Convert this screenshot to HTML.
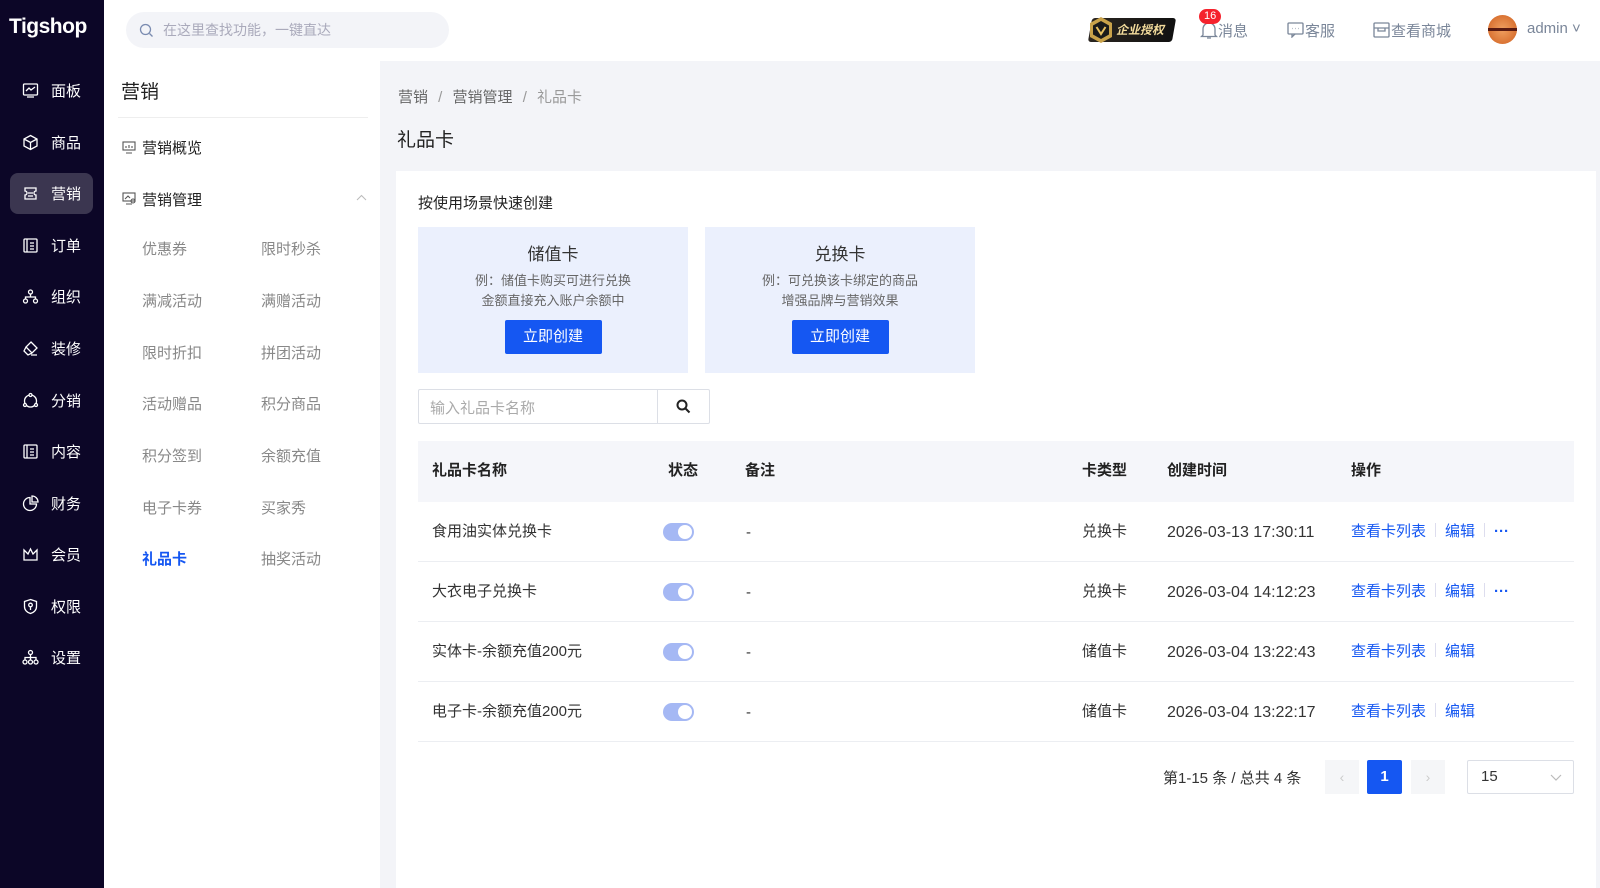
<!DOCTYPE html>
<html><head><meta charset="utf-8">
<style>
*{margin:0;padding:0;box-sizing:border-box}
body{width:1600px;height:888px;overflow:hidden;font-family:"Liberation Sans","Noto Sans CJK SC",sans-serif;background:#f3f4f8;color:#333;position:relative;font-size:14px}
.abs{position:absolute}
.side{left:0;top:0;width:104px;height:888px;background:#0c0627}
.logo{left:9px;top:15px;color:#fff;font-weight:bold;font-size:21px;letter-spacing:-0.5px}
.nav{left:10px;width:83px;height:41px;border-radius:8px;color:#fff;font-size:15px}
.nav svg{position:absolute;left:12px;top:12px}
.nav span{position:absolute;left:41px;top:10px}
.nav.act{background:#3b3650}
.top{left:104px;top:0;width:1496px;height:61px;background:#fff}
.srch{left:126px;top:12px;width:323px;height:36px;border-radius:18px;background:#f3f4f8;color:#aab;font-size:14px}
.sub{left:104px;top:61px;width:276px;height:827px;background:#fff}
.gray{color:#888;font-size:15px}
.card{left:396px;top:171px;width:1200px;height:717px;background:#fff}
.sc{background:#ebf0fd;width:270px;height:146px;text-align:center}
.btn{background:#1557f2;color:#fff;border-radius:2px;width:97px;height:34px;line-height:34px;font-size:15px;margin:0 auto}
.th{left:418px;top:441px;width:1156px;height:61px;background:#f5f6fa}
.row{left:418px;width:1156px;height:60px;border-bottom:1px solid #eceef2}
.t{position:absolute;top:20px;font-size:15px;line-height:20px;height:20px;color:#333}
.tg{position:absolute;left:245px;top:21px;width:31px;height:18px;border-radius:9px;background:#a5b8f4}
.tg:after{content:"";position:absolute;right:2px;top:2px;width:14px;height:14px;border-radius:7px;background:#fff}
.lk{color:#1557f2}
.sep{display:inline-block;width:1px;height:14px;background:#dde;margin:0 9px;vertical-align:-1px}
</style></head><body>
<div class="abs side"></div>
<div class="abs logo">Tigshop</div>
<div class="abs nav" style="top:70px"><svg width="17" height="17" viewBox="0 0 17 17" fill="none" stroke="#fff" stroke-width="1.3"><rect x="1.5" y="2" width="14" height="11" rx="1"/><path d="M4 9l3-3 2 2 4-3M5 15h7"/></svg><span>面板</span></div>
<div class="abs nav" style="top:122px"><svg width="17" height="17" viewBox="0 0 17 17" fill="none" stroke="#fff" stroke-width="1.3"><path d="M8.5 1.5l6.5 3.5v7l-6.5 3.5-6.5-3.5v-7zM2 5l6.5 3.5L15 5M8.5 8.5v7"/></svg><span>商品</span></div>
<div class="abs nav act" style="top:173px"><svg width="17" height="17" viewBox="0 0 17 17" fill="none" stroke="#fff" stroke-width="1.3"><path d="M3 3h11v3a2 2 0 000 4v4H3v-4a2 2 0 000-4zM6 8h5M6 11h5"/></svg><span>营销</span></div>
<div class="abs nav" style="top:225px"><svg width="17" height="17" viewBox="0 0 17 17" fill="none" stroke="#fff" stroke-width="1.3"><rect x="2" y="2" width="13" height="13" rx="1"/><path d="M5 2v13M8 6h4M8 9h4M8 12h4"/></svg><span>订单</span></div>
<div class="abs nav" style="top:276px"><svg width="17" height="17" viewBox="0 0 17 17" fill="none" stroke="#fff" stroke-width="1.3"><circle cx="8.5" cy="4" r="2"/><circle cx="3.5" cy="13" r="2"/><circle cx="13.5" cy="13" r="2"/><path d="M8.5 6v3M3.5 11V9h10v2"/></svg><span>组织</span></div>
<div class="abs nav" style="top:328px"><svg width="17" height="17" viewBox="0 0 17 17" fill="none" stroke="#fff" stroke-width="1.3"><path d="M9 2l6 6-5 5-6-6zM4 7l-2 4 4 4 4-2M9 15h6"/></svg><span>装修</span></div>
<div class="abs nav" style="top:380px"><svg width="17" height="17" viewBox="0 0 17 17" fill="none" stroke="#fff" stroke-width="1.3"><circle cx="8.5" cy="9" r="6"/><circle cx="8.5" cy="3" r="1.5" fill="#0c0627"/><circle cx="3" cy="13" r="1.5" fill="#0c0627"/><circle cx="14" cy="13" r="1.5" fill="#0c0627"/></svg><span>分销</span></div>
<div class="abs nav" style="top:431px"><svg width="17" height="17" viewBox="0 0 17 17" fill="none" stroke="#fff" stroke-width="1.3"><rect x="2" y="2" width="13" height="13" rx="1"/><path d="M5 2v13M8 6h4M8 9h4M8 12h4"/></svg><span>内容</span></div>
<div class="abs nav" style="top:483px"><svg width="17" height="17" viewBox="0 0 17 17" fill="none" stroke="#fff" stroke-width="1.3"><path d="M8 2.5a6.5 6.5 0 106.5 6.5H8z"/><path d="M10 1v6h6a6 6 0 00-6-6z"/></svg><span>财务</span></div>
<div class="abs nav" style="top:534px"><svg width="17" height="17" viewBox="0 0 17 17" fill="none" stroke="#fff" stroke-width="1.3"><path d="M2 4l4 4 2.5-5 2.5 5 4-4v10H2z"/></svg><span>会员</span></div>
<div class="abs nav" style="top:586px"><svg width="17" height="17" viewBox="0 0 17 17" fill="none" stroke="#fff" stroke-width="1.3"><path d="M8.5 1.5l6 2v5c0 4-3 6-6 7-3-1-6-3-6-7v-5z"/><circle cx="8.5" cy="7" r="1.8"/><path d="M8.5 9v3"/></svg><span>权限</span></div>
<div class="abs nav" style="top:637px"><svg width="17" height="17" viewBox="0 0 17 17" fill="none" stroke="#fff" stroke-width="1.3"><circle cx="8.5" cy="3.5" r="2"/><circle cx="3" cy="13" r="2"/><circle cx="8.5" cy="13" r="2"/><circle cx="14" cy="13" r="2"/><path d="M8.5 5.5V11M3 11V8.5h11V11"/></svg><span>设置</span></div>

<div class="abs top"></div>
<div class="abs srch"><svg class="abs" style="left:13px;top:11px" width="15" height="15" viewBox="0 0 15 15" fill="none" stroke="#7a8bb0" stroke-width="1.3"><circle cx="6.5" cy="6.5" r="5"/><path d="M10.5 10.5l3 3"/></svg><span class="abs" style="left:37px;top:8px">在这里查找功能，一键直达</span></div>
<div class="abs" style="left:1090px;top:18px;width:84px;height:24px;background:linear-gradient(90deg,#2a2520,#111);border-radius:3px;transform:skewX(-10deg)"></div>
<svg class="abs" style="left:1088px;top:16px" width="26" height="28" viewBox="0 0 26 28"><path d="M13 1l11 6v14l-11 6-11-6V7z" fill="#c9a24a"/><path d="M13 5l8 4.5v9L13 23l-8-4.5v-9z" fill="#1a1a1a"/><path d="M8.5 11l4.5 7 4.5-7" stroke="#e8c060" stroke-width="2" fill="none"/></svg>
<div class="abs" style="left:1116px;top:21px;color:#f3dc9c;font-size:12px;font-weight:bold;font-style:italic">企业授权</div>
<svg class="abs" style="left:1200px;top:21px" width="18" height="19" viewBox="0 0 18 19" fill="none" stroke="#7a8699" stroke-width="1.3"><path d="M3 14V8a6 6 0 0112 0v6l1.5 1.5h-15zM7 17h4"/></svg>
<div class="abs" style="left:1199px;top:9px;background:#f5222d;color:#fff;font-size:11px;border-radius:8px;padding:0 5px;line-height:15px">16</div>
<div class="abs" style="left:1218px;top:20px;color:#7a8699;font-size:15px">消息</div>
<svg class="abs" style="left:1287px;top:22px" width="17" height="16" viewBox="0 0 17 16" fill="none" stroke="#7a8699" stroke-width="1.3"><rect x="1" y="1" width="15" height="11" rx="1"/><path d="M5 12v3l3-3M5 6.5h.5M8.3 6.5h.5M11.5 6.5h.5"/></svg>
<div class="abs" style="left:1305px;top:20px;color:#7a8699;font-size:15px">客服</div>
<svg class="abs" style="left:1373px;top:22px" width="17" height="16" viewBox="0 0 17 16" fill="none" stroke="#7a8699" stroke-width="1.3"><rect x="1" y="1" width="15" height="14" rx="1"/><path d="M1 6h15M5 6v3h7V6"/></svg>
<div class="abs" style="left:1391px;top:20px;color:#7a8699;font-size:15px">查看商城</div>
<div class="abs" style="left:1488px;top:15px;width:29px;height:29px;border-radius:50%;background:radial-gradient(circle,#f0a060,#d06020)"></div>
<div class="abs" style="left:1488px;top:28px;width:29px;height:3px;background:#5a1a10"></div>
<div class="abs" style="left:1527px;top:20px;color:#7a8699;font-size:15px">admin ˅</div>

<div class="abs sub"></div>
<div class="abs" style="left:121px;top:77px;font-size:19px;color:#222">营销</div>
<div class="abs" style="left:118px;top:117px;width:250px;height:1px;background:#eee"></div>
<svg class="abs" style="left:122px;top:141px" width="14" height="13" viewBox="0 0 14 13" fill="none" stroke="#555" stroke-width="1.1"><rect x="1" y="1" width="12" height="8"/><path d="M4 12h6M4 7V5M7 7V4M10 7V5"/></svg>
<div class="abs" style="left:142px;top:137px;font-size:15px;color:#222">营销概览</div>
<svg class="abs" style="left:122px;top:192px" width="14" height="13" viewBox="0 0 14 13" fill="none" stroke="#555" stroke-width="1.1"><rect x="1" y="1" width="12" height="8"/><path d="M3 7l3-3 2 2M4 12h6"/><circle cx="11" cy="9" r="2"/></svg>
<div class="abs" style="left:142px;top:189px;font-size:15px;color:#222">营销管理</div>
<svg class="abs" style="left:356px;top:194px" width="11" height="7" viewBox="0 0 11 7" fill="none" stroke="#bbb" stroke-width="1"><path d="M1 6l4.5-4.5L10 6"/></svg>
<div class="abs gray" style="left:142px;top:238px">优惠券</div><div class="abs gray" style="left:261px;top:238px">限时秒杀</div>
<div class="abs gray" style="left:142px;top:290px">满减活动</div><div class="abs gray" style="left:261px;top:290px">满赠活动</div>
<div class="abs gray" style="left:142px;top:342px">限时折扣</div><div class="abs gray" style="left:261px;top:342px">拼团活动</div>
<div class="abs gray" style="left:142px;top:393px">活动赠品</div><div class="abs gray" style="left:261px;top:393px">积分商品</div>
<div class="abs gray" style="left:142px;top:445px">积分签到</div><div class="abs gray" style="left:261px;top:445px">余额充值</div>
<div class="abs gray" style="left:142px;top:497px">电子卡券</div><div class="abs gray" style="left:261px;top:497px">买家秀</div>
<div class="abs" style="left:142px;top:548px;font-size:15px;color:#1557f2;font-weight:bold">礼品卡</div><div class="abs gray" style="left:261px;top:548px">抽奖活动</div>

<div class="abs" style="left:398px;top:86px;font-size:15px;color:#666">营销 <span style="margin:0 6px;color:#999">/</span> 营销管理 <span style="margin:0 6px;color:#999">/</span> <span style="color:#999">礼品卡</span></div>
<div class="abs" style="left:397px;top:125px;font-size:19px;color:#222">礼品卡</div>
<div class="abs card"></div>
<div class="abs" style="left:418px;top:192px;font-size:15px;color:#222">按使用场景快速创建</div>
<div class="abs sc" style="left:418px;top:227px"><div style="font-size:17px;color:#333;margin-top:13px">储值卡</div><div style="font-size:13px;color:#666;line-height:20px;margin-top:6px">例：储值卡购买可进行兑换<br>金额直接充入账户余额中</div><div class="btn" style="margin-top:9px">立即创建</div></div>
<div class="abs sc" style="left:705px;top:227px"><div style="font-size:17px;color:#333;margin-top:13px">兑换卡</div><div style="font-size:13px;color:#666;line-height:20px;margin-top:6px">例：可兑换该卡绑定的商品<br>增强品牌与营销效果</div><div class="btn" style="margin-top:9px">立即创建</div></div>
<div class="abs" style="left:418px;top:389px;width:292px;height:35px;border:1px solid #dcdfe6;border-radius:2px"><span class="abs" style="left:11px;top:7px;color:#aaa;font-size:15px">输入礼品卡名称</span><div class="abs" style="left:238px;top:0;width:1px;height:33px;background:#dcdfe6"></div><svg class="abs" style="left:257px;top:9px" width="15" height="15" viewBox="0 0 15 15" fill="none" stroke="#222" stroke-width="2"><circle cx="6" cy="6" r="4.5"/><path d="M9.5 9.5l4 4"/></svg></div>

<div class="abs th"><span class="t" style="left:14px;font-weight:bold;color:#222">礼品卡名称</span><span class="t" style="left:250px;font-weight:bold;color:#222">状态</span><span class="t" style="left:327px;font-weight:bold;color:#222">备注</span><span class="t" style="left:664px;font-weight:bold;color:#222">卡类型</span><span class="t" style="left:749px;font-weight:bold;color:#222">创建时间</span><span class="t" style="left:933px;font-weight:bold;color:#222">操作</span></div>
<div class="abs row" style="top:502px"><span class="t" style="left:14px">食用油实体兑换卡</span><div class="tg"></div><span class="t" style="left:328px;top:21px">-</span><span class="t" style="left:664px">兑换卡</span><span class="t" style="left:749px;top:21px;font-size:16px">2026-03-13 17:30:11</span><span class="t lk" style="left:933px">查看卡列表<span class="sep"></span>编辑<span class="sep"></span><b>···</b></span></div>
<div class="abs row" style="top:562px"><span class="t" style="left:14px">大衣电子兑换卡</span><div class="tg"></div><span class="t" style="left:328px;top:21px">-</span><span class="t" style="left:664px">兑换卡</span><span class="t" style="left:749px;top:21px;font-size:16px">2026-03-04 14:12:23</span><span class="t lk" style="left:933px">查看卡列表<span class="sep"></span>编辑<span class="sep"></span><b>···</b></span></div>
<div class="abs row" style="top:622px"><span class="t" style="left:14px">实体卡-余额充值200元</span><div class="tg"></div><span class="t" style="left:328px;top:21px">-</span><span class="t" style="left:664px">储值卡</span><span class="t" style="left:749px;top:21px;font-size:16px">2026-03-04 13:22:43</span><span class="t lk" style="left:933px">查看卡列表<span class="sep"></span>编辑</span></div>
<div class="abs row" style="top:682px"><span class="t" style="left:14px">电子卡-余额充值200元</span><div class="tg"></div><span class="t" style="left:328px;top:21px">-</span><span class="t" style="left:664px">储值卡</span><span class="t" style="left:749px;top:21px;font-size:16px">2026-03-04 13:22:17</span><span class="t lk" style="left:933px">查看卡列表<span class="sep"></span>编辑</span></div>

<div class="abs" style="left:1163px;top:767px;font-size:15px;color:#333">第1-15 条 / 总共 4 条</div>
<div class="abs" style="left:1325px;top:760px;width:34px;height:34px;background:#f5f6f8;color:#ccc;text-align:center;line-height:34px">‹</div>
<div class="abs" style="left:1367px;top:760px;width:35px;height:34px;background:#1557f2;color:#fff;text-align:center;line-height:34px;font-weight:bold;border-radius:2px;font-size:15px">1</div>
<div class="abs" style="left:1411px;top:760px;width:34px;height:34px;background:#f5f6f8;color:#ccc;text-align:center;line-height:34px">›</div>
<div class="abs" style="left:1467px;top:760px;width:107px;height:34px;border:1px solid #dcdfe6;border-radius:2px"><span class="abs" style="left:13px;top:7px;font-size:15px">15</span><svg class="abs" style="left:82px;top:13px" width="12" height="7" viewBox="0 0 12 7" fill="none" stroke="#bbb" stroke-width="1.2"><path d="M1 1l5 5 5-5"/></svg></div>
</body></html>
